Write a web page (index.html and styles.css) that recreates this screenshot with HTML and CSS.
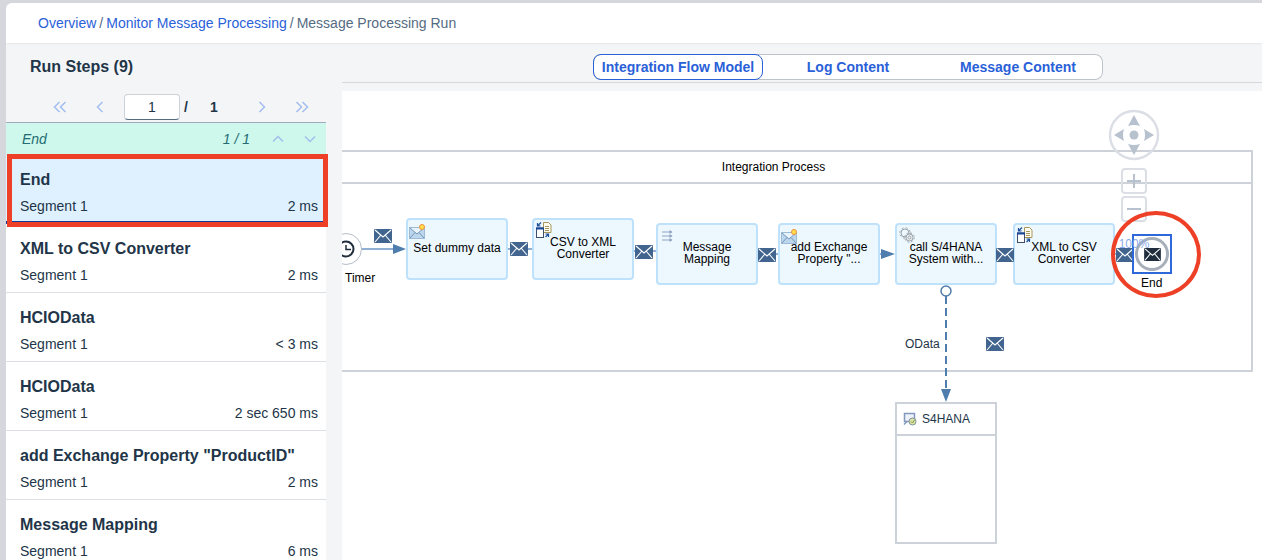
FILE: index.html
```html
<!DOCTYPE html>
<html lang="en">
<head>
<meta charset="utf-8">
<title>Message Processing Run</title>
<link rel="stylesheet" href="styles.css">
</head>
<body>
<svg class="sprite" aria-hidden="true">
  <symbol id="mail" viewBox="0 0 18 14">
    <rect width="18" height="14" rx="1" fill="currentColor"/>
    <path d="M1 1 L9 8 L17 1 M1 13 L6.500 6.500 M17 13 L11.500 6.500" fill="none" stroke="#fff" stroke-width="1.100"/>
  </symbol>
  <symbol id="modifier" viewBox="0 0 17 15">
    <rect x="0.500" y="3.500" width="15" height="11" fill="#bcd6ec" stroke="#9dbbd6"/>
    <path d="M1 4 L8 10 L15 4Z" fill="#e8f3fb"/>
    <path d="M1 4 L8 10 L15 4 M1 14 L6 8.500 M15 14 L10 8.500" fill="none" stroke="#7596b9"/>
    <circle cx="13" cy="3" r="2.500" fill="#ffe04a" stroke="#f0903c"/>
  </symbol>
  <symbol id="converter" viewBox="0 0 16 16">
    <path d="M7.500 .5h5l2.500 2.500v7.500h-7.500z" fill="#fffdf2" stroke="#a8975a"/>
    <path d="M9 4.500h4M9 6.500h4M9 8.500h4" stroke="#a8975a"/>
    <rect x=".5" y="6" width="7" height="9.500" fill="#fff" stroke="#3d4f6b"/>
    <path d="M0 6.500h8" stroke="#17479a" stroke-width="2"/>
    <path d="M5 0.500L2 3.500M1.500 1v3h3M9.500 15L12 12.500M9.500 12h3v3" fill="none" stroke="#1d4f9c" stroke-width="1.200"/>
  </symbol>
  <symbol id="mapping" viewBox="0 0 12 12">
    <path d="M0 2h10M0 6h10M0 10h10" stroke="#8fa3bf" stroke-width="1.200"/>
    <path d="M7.500 0l3 2-3 2zM7.500 4l3 2-3 2zM7.500 8l3 2-3 2z" fill="#8fa3bf"/>
  </symbol>
  <symbol id="gears" viewBox="0 0 16 16">
    <g fill="none" stroke="#9aa1a8">
      <circle cx="6" cy="6" r="4" /><circle cx="6" cy="6" r="5.200" stroke-dasharray="2 2.080"/>
      <circle cx="10.500" cy="10.500" r="3.500" fill="#f1f5f8"/><circle cx="10.500" cy="10.500" r="4.700" stroke-dasharray="2 1.690"/>
      <circle cx="10.500" cy="10.500" r="1.500"/>
    </g>
  </symbol>
</svg>

<div class="shell">
  <nav class="breadcrumb" aria-label="Breadcrumb">
    <a href="#">Overview</a><span>/</span><a href="#">Monitor Message Processing</a><span>/</span><span>Message Processing Run</span>
  </nav>
  <div class="body">
    <aside class="steps">
      <h1 class="steps-title">Run Steps (9)</h1>
      <div class="pager">
        <button aria-label="First page"><svg width="14" height="12"><path d="M6.500 1L1.500 6l5 5M12.500 1l-5 5 5 5"/></svg></button>
        <button aria-label="Previous page"><svg width="14" height="12"><path d="M9.500 1l-5 5 5 5"/></svg></button>
        <input class="page-input" type="text" value="1" aria-label="Page">
        <span class="slash">/</span>
        <span class="total">1</span>
        <button class="next" aria-label="Next page"><svg width="14" height="12"><path d="M4.500 1l5 5-5 5"/></svg></button>
        <button aria-label="Last page"><svg width="14" height="12"><path d="M1.500 1l5 5-5 5M7.500 1l5 5-5 5"/></svg></button>
      </div>
      <div class="group">
        <span class="group-name">End</span>
        <span>1 / 1</span>
        <button aria-label="Previous match"><svg width="12" height="8"><path d="M1 6.500l5-5 5 5"/></svg></button>
        <button aria-label="Next match"><svg width="12" height="8"><path d="M1 1.500l5 5 5-5"/></svg></button>
      </div>
      <ul class="list">
        <li class="item selected"><h2>End</h2><p><span>Segment 1</span><span>2 ms</span></p></li>
        <li class="item"><h2>XML to CSV Converter</h2><p><span>Segment 1</span><span>2 ms</span></p></li>
        <li class="item"><h2>HCIOData</h2><p><span>Segment 1</span><span>&lt; 3 ms</span></p></li>
        <li class="item"><h2>HCIOData</h2><p><span>Segment 1</span><span>2 sec 650 ms</span></p></li>
        <li class="item"><h2>add Exchange Property "ProductID"</h2><p><span>Segment 1</span><span>2 ms</span></p></li>
        <li class="item"><h2>Message Mapping</h2><p><span>Segment 1</span><span>6 ms</span></p></li>
      </ul>
    </aside>
    <main class="content">
      <div class="tabbar">
        <div class="segmented">
          <button class="active">Integration Flow Model</button>
          <button>Log Content</button>
          <button>Message Content</button>
        </div>
      </div>
      <div class="canvas">
        <div class="pool"><div class="pool-name">Integration Process</div></div>
        <svg class="flows" width="920" height="469" aria-hidden="true">
          <g fill="none" stroke="#8fb0d3" stroke-width="2">
            <path d="M19 158H54M166 158H190M292 160H314M416 163H436M538 163H544M655 163H671M773 163H791"/>
          </g>
          <path d="M51 153l13 5-13 5zM539 158l14 5-14 5z" fill="#4f7dae"/>
          <circle cx="4" cy="158" r="15.500" fill="#fff" stroke="#b5bdc8"/>
          <circle cx="4" cy="158" r="7.500" fill="none" stroke="#1f2d3d" stroke-width="2"/>
          <path d="M4 154v4.500h5" fill="none" stroke="#1f2d3d" stroke-width="1.500"/>
          <path d="M604 205V298" stroke="#4f7dae" stroke-width="2" stroke-dasharray="8 4"/>
          <path d="M599 298h10l-5 13z" fill="#4f7dae"/>
          <circle cx="604" cy="200" r="5" fill="#fff" stroke="#4f7dae" stroke-width="1.500"/>
        </svg>
        <span class="caption timer">Timer</span>
        <span class="caption odata">OData</span>

        <div class="node n1"><svg class="modifier" width="17" height="15"><use href="#modifier"/></svg>Set dummy data</div>
        <div class="node n2"><svg width="16" height="16"><use href="#converter"/></svg>CSV to XML<br>Converter</div>
        <div class="node n3"><svg class="mapping" width="12" height="12"><use href="#mapping"/></svg>Message<br>Mapping</div>
        <div class="node n4"><svg class="modifier" width="17" height="15"><use href="#modifier"/></svg>add Exchange<br>Property "...</div>
        <div class="node n5"><svg width="16" height="16"><use href="#gears"/></svg>call S/4HANA<br>System with...</div>
        <div class="node n6"><svg width="16" height="16"><use href="#converter"/></svg>XML to CSV<br>Converter</div>

        <svg class="mail m1"><use href="#mail"/></svg>
        <svg class="mail m2"><use href="#mail"/></svg>
        <svg class="mail m3"><use href="#mail"/></svg>
        <svg class="mail m4"><use href="#mail"/></svg>
        <svg class="mail m5"><use href="#mail"/></svg>
        <svg class="mail m6"><use href="#mail"/></svg>
        <svg class="mail m7"><use href="#mail"/></svg>

        <div class="receiver">
          <div class="receiver-name">
            <svg width="14" height="14"><path d="M1.500 1.500h10v8h-10z" fill="#eef3fa" stroke="#8299bd" stroke-width="1.500"/><path d="M1 12.500L4 9.500" stroke="#8299bd" stroke-width="1.500"/><circle cx="9.500" cy="9.500" r="3.500" fill="#dfe3a0" stroke="#7f93a0"/><path d="M8 9.500l1.500 1.500 2-3" fill="none" stroke="#7c9a58"/></svg>
            S4HANA
          </div>
        </div>

        <div class="end-event">
          <svg width="36" height="36"><circle cx="18" cy="18" r="15.500" fill="#fff" stroke="#a7b0b9" stroke-width="3"/><use href="#mail" x="10" y="12" width="17" height="13"/></svg>
        </div>
        <span class="caption end">End</span>

        <div class="navigator">
          <button class="pan" aria-label="Pan"><svg width="52" height="52"><circle cx="26" cy="26" r="24" fill="none" stroke="#dbdfe5" stroke-width="2.500"/><path d="M26 6l6 11q-6-2-12 0zM26 46l6-11q-6 2-12 0zM6 26l10-6q-2 6 0 12zM46 26l-10-6q2 6 0 12z" fill="#b8c1ce"/><circle cx="26" cy="26" r="4.500" fill="#b8c1ce"/></svg></button>
          <button class="zoom" aria-label="Zoom in"><svg width="16" height="16"><path d="M1 8h14M8 1v14"/></svg></button>
          <button class="zoom" aria-label="Zoom out"><svg width="16" height="16"><path d="M1 8h14"/></svg></button>
          <span class="level">100%</span>
        </div>
        <div class="mark-circle"></div>
      </div>
    </main>
  </div>
</div>
</body>
</html>
```
FILE: styles.css
```css
* { box-sizing: border-box; }
body {
  margin: 0;
  height: 100vh;
  overflow: hidden;
  padding: 3px 0 0 6px;
  background: #d5d7dc;
  color: #223548;
  font: 14px/20px "Liberation Sans", Arial, sans-serif;
}
button { padding: 0; border: 0; background: none; font: inherit; }
button svg { display: block; }
.sprite { position: absolute; width: 0; height: 0; }
.shell {
  display: flex;
  flex-direction: column;
  height: 100%;
  overflow: hidden;
  border-top-left-radius: 6px;
  background: #f4f5f7;
}
.breadcrumb {
  display: flex;
  flex: none;
  gap: 3px;
  height: 40px;
  padding: 10px 32px;
  background: #fff;
  color: #556b82;
  box-shadow: 0 0 2px #d0d4d9;
}
.breadcrumb a { color: #2a61d8; text-decoration: none; }
.body { display: flex; flex: 1; gap: 16px; min-height: 0; }
.steps { flex: none; width: 320px; }
.steps-title { margin: 0; padding: 14px 24px 0; font-size: 16px; line-height: 20px; }
.pager { display: flex; align-items: center; height: 46px; padding: 16px 16px 2px 46px; border-bottom: 1px solid #a3a9bd; }
.pager button { display: grid; flex: none; place-items: center; width: 16px; margin-right: 24px; }
.pager button:last-child { margin-right: 0; }
.pager svg, .group svg { fill: none; stroke: #a3bdee; stroke-width: 1.500; }
.page-input {
  flex: none;
  width: 56px;
  height: 26px;
  margin-left: -8px;
  border: 1px solid #ccd2d8;
  border-bottom-color: #556b82;
  border-radius: 4px;
  background: #fff;
  color: #223548;
  font: inherit;
  text-align: center;
}
.slash, .total { font-weight: 700; }
.slash { margin: 0 22px 0 4px; }
.pager .next { margin-left: 36px; }
.group {
  display: flex;
  align-items: center;
  gap: 20px;
  height: 32px;
  padding: 0 10px 0 16px;
  background: #cef8ec;
  color: #246b73;
  font-style: italic;
}
.group-name { flex: 1; }
.group span + button { margin-left: 2px; }
.list { margin: 0; padding: 0; list-style: none; background: #fff; }
.item { height: 69px; padding: 15px 8px 0 14px; border-bottom: 1px solid #dcdfe3; }
.item h2 { margin: 0; font-size: 16px; line-height: 20px; }
.item p { display: flex; justify-content: space-between; margin: 6px 0 0; }
.item.selected {
  position: relative;
  border-bottom: 3px solid #0b3a9c;
  background: #dff1ff;
}
.item.selected::after {
  content: "";
  position: absolute;
  inset: -1px -2px -6px 1px;
  border: 5px solid #ee4026;
}
.content { display: flex; flex: 1; flex-direction: column; min-width: 0; }
.tabbar {
  display: flex;
  flex: none;
  justify-content: center;
  height: 40px;
  padding: 11px 0 2px 92px;
  border-bottom: 1px solid #d5d8dc;
}
.segmented {
  display: grid;
  grid-template-columns: repeat(3, 1fr);
  width: 510px;
  height: 26px;
  border-radius: 8px;
  background: #fff;
  box-shadow: inset 0 0 0 1px #bcc3ca;
}
.segmented button { border-radius: 8px; color: #2a61d8; font-weight: 700; white-space: nowrap; }
.segmented .active { border: 1px solid #2a61d8; }
.canvas {
  position: relative;
  flex: 1;
  margin-top: 8px;
  overflow: hidden;
  background: #fff;
  color: #000;
  font: 12px/12px "Liberation Sans", Arial, sans-serif;
}
.pool { position: absolute; left: -20px; top: 59px; width: 931px; height: 222px; border: 2px solid #cdd2d9; }
.pool-name { height: 32px; padding-right: 28px; border-bottom: 2px solid #cdd2d9; line-height: 30px; text-align: center; }
.flows { position: absolute; left: 0; top: 0; }
.caption { position: absolute; }
.timer { left: 3px; top: 181px; }
.odata { left: 563px; top: 247px; color: #223548; }
.end { left: 799px; top: 186px; }
.node {
  position: absolute;
  display: grid;
  place-content: center;
  width: 102px;
  height: 62px;
  padding-bottom: 3px;
  border: 2px solid #bfe2fc;
  border-radius: 4px;
  background: #ecf7fe;
  text-align: center;
  white-space: nowrap;
}
.node svg { position: absolute; left: 2px; top: 2px; }
.node .modifier { left: 1px; top: 4px; }
.node .mapping { left: 4px; top: 5px; }
.n1 { left: 64px; top: 127px; }
.n2 { left: 190px; top: 127px; }
.n3 { left: 314px; top: 132px; }
.n4 { left: 436px; top: 132px; }
.n5 { left: 553px; top: 132px; }
.n6 { left: 671px; top: 132px; }
.mail { position: absolute; width: 18px; height: 14px; color: #41658f; }
.m1 { left: 32px; top: 138px; }
.m2 { left: 168px; top: 151px; }
.m3 { left: 293px; top: 154px; }
.m4 { left: 416px; top: 157px; }
.m5 { left: 654px; top: 157px; }
.m6 { left: 774px; top: 157px; }
.m7 { left: 644px; top: 246px; }
.receiver { position: absolute; left: 553px; top: 311px; width: 102px; height: 142px; border: 2px solid #cdd2d9; }
.receiver-name {
  display: flex;
  align-items: center;
  gap: 5px;
  height: 32px;
  padding-left: 6px;
  border-bottom: 2px solid #cdd2d9;
  color: #223548;
}
.end-event { position: absolute; left: 790px; top: 143px; border: 2px solid #2f68d8; width: 40px; height: 40px; color: #1f2d3d; }
.end-event svg { display: block; }
.navigator {
  position: absolute;
  left: 766px;
  top: 18px;
  display: flex;
  flex-direction: column;
  align-items: center;
  gap: 2px;
  width: 52px;
}
.zoom {
  display: grid;
  place-items: center;
  width: 26px;
  height: 26px;
  border: 2px solid #dbdfe5;
  border-radius: 4px;
}
.pan { margin-bottom: 5px; }
.zoom svg { stroke: #b8c1ce; stroke-width: 2; }
.level { margin-top: 14px; color: #8ba9e8; }
.mark-circle { position: absolute; left: 769px; top: 120px; width: 90px; height: 87px; border: 4px solid #ee4026; border-radius: 50%; }
```
